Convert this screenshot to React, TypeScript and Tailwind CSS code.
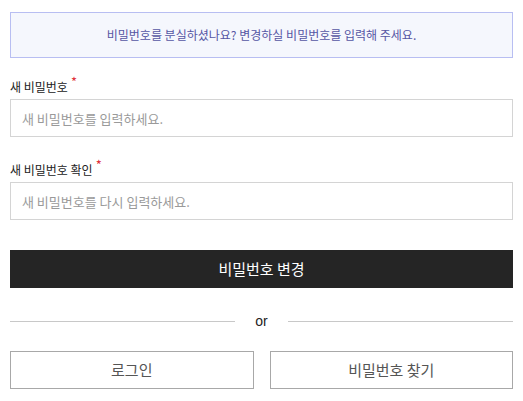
import React from 'react';

const font = { fontFamily: '"Noto Sans CJK KR", "Noto Sans", sans-serif' };

const Field: React.FC<{ label: string; placeholder: string }> = ({ label, placeholder }) => (
  <div>
    <label className="flex items-start h-[20px] text-[12px] text-[#222] leading-[20px]">
      {label}
      <span className="text-[#e0323c] text-[13px] leading-[13px] ml-[3px] -mt-[2px]">*</span>
    </label>
    <input
      type="password"
      placeholder={placeholder}
      className="block mt-[2px] w-full h-[38px] border border-[#d4d4d4] px-[11px] text-[13px] text-[#333] placeholder:text-[#9a9a9a] outline-none"
    />
  </div>
);

export default function App() {
  return (
    <div className="w-[523px] h-[401px] bg-white px-[10px] pt-[12px]" style={font}>
      <div className="h-[46px] border border-[#b8bef2] bg-[#f5f7fd] flex items-center justify-center text-[12px] text-[#5656a4]">
        비밀번호를 분실하셨나요? 변경하실 비밀번호를 입력해 주세요.
      </div>

      <div className="mt-[19px] flex flex-col gap-[23px]">
        <Field label="새 비밀번호" placeholder="새 비밀번호를 입력하세요." />
        <Field label="새 비밀번호 확인" placeholder="새 비밀번호를 다시 입력하세요." />
      </div>

      <button className="block mt-[30px] w-full h-[38px] bg-[#252525] text-white text-[15px]">
        비밀번호 변경
      </button>

      <div className="mt-[23px] h-[20px] flex items-center gap-[20px]">
        <div className="flex-1 h-px bg-[#c8c8c8]" />
        <span className="text-[14px] text-[#222] leading-[20px]" style={{ fontFamily: '"Liberation Sans", sans-serif' }}>or</span>
        <div className="flex-1 h-px bg-[#c8c8c8]" />
      </div>

      <div className="mt-[20px] grid grid-cols-2 gap-[16px]">
        <button className="h-[38px] border border-[#a8a8a8] text-[15px] text-[#555]">로그인</button>
        <button className="h-[38px] border border-[#a8a8a8] text-[15px] text-[#555]">비밀번호 찾기</button>
      </div>
    </div>
  );
}
